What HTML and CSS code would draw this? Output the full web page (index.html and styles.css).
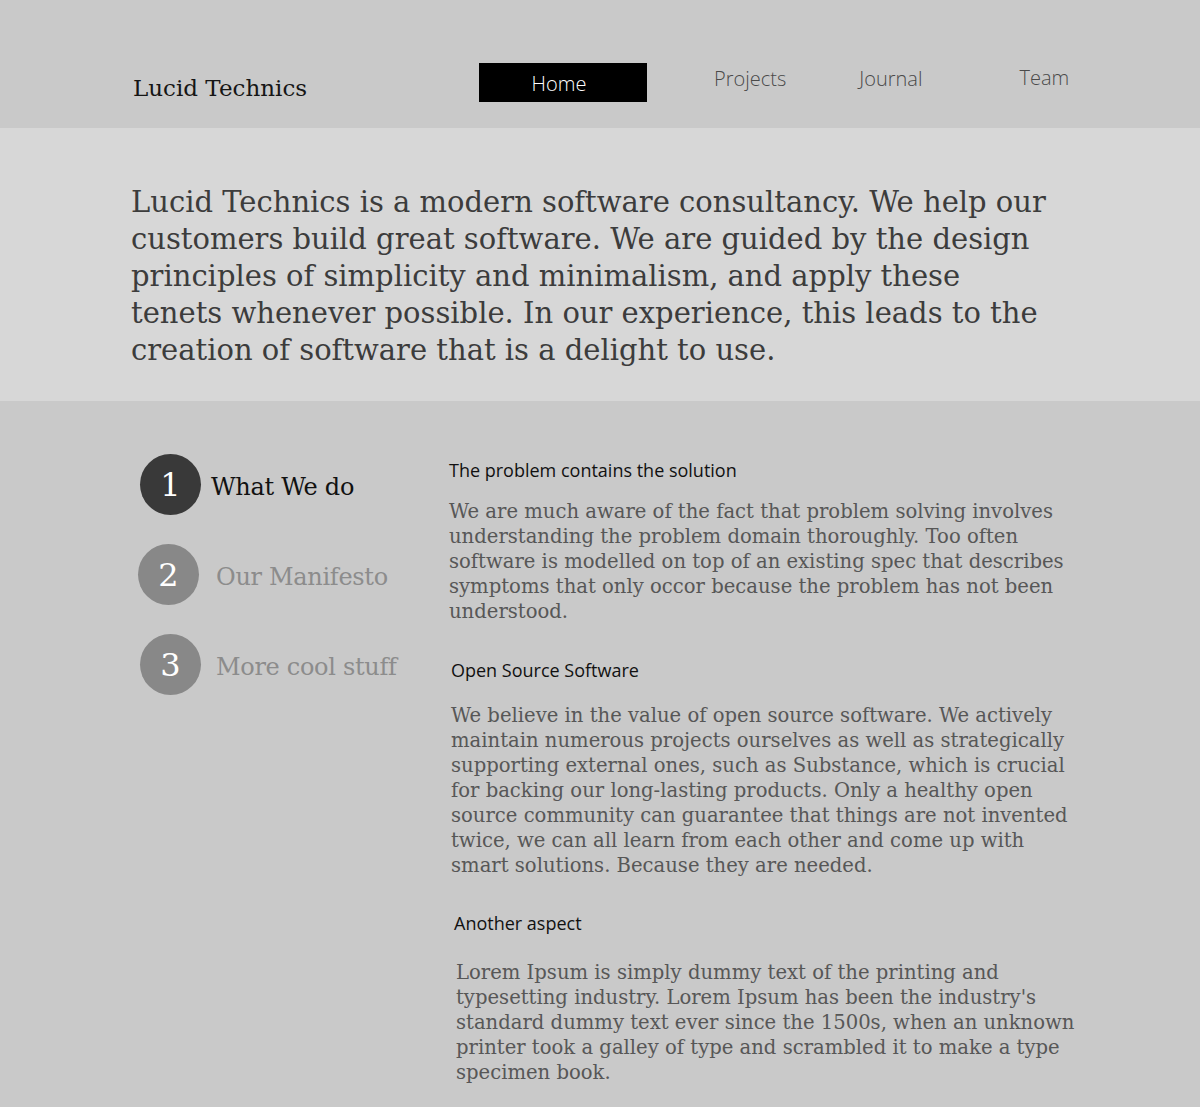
FILE: index.html
```html
<!DOCTYPE html>
<html lang="en">
<head>
<meta charset="utf-8">
<title>Lucid Technics</title>
<link rel="stylesheet" href="styles.css">
</head>
<body>
<header class="header">
  <div class="logo">Lucid Technics</div>
  <nav class="nav">
    <a class="nav-item nav-home">Home</a>
    <a class="nav-item nav-projects">Projects</a>
    <a class="nav-item nav-journal">Journal</a>
    <a class="nav-item nav-team">Team</a>
  </nav>
</header>
<section class="hero">
  <p class="hero-text">Lucid Technics is a modern software consultancy. We help our customers build great software. We are guided by the design principles of simplicity and minimalism, and apply these tenets whenever possible. In our experience, this leads to the creation of software that is a delight to use.</p>
</section>
<main class="main">
  <ul class="steps">
    <li class="step step-active"><span class="circle">1</span><span class="step-label">What We do</span></li>
    <li class="step step-2"><span class="circle">2</span><span class="step-label">Our Manifesto</span></li>
    <li class="step step-3"><span class="circle">3</span><span class="step-label">More cool stuff</span></li>
  </ul>
  <div class="content">
    <article class="block block-1">
      <h3 class="block-title">The problem contains the solution</h3>
      <p class="block-text">We are much aware of the fact that problem solving involves understanding the problem domain thoroughly. Too often software is modelled on top of an existing spec that describes symptoms that only occor because the problem has not been understood.</p>
    </article>
    <article class="block block-2">
      <h3 class="block-title">Open Source Software</h3>
      <p class="block-text">We believe in the value of open source software. We actively maintain numerous projects ourselves as well as strategically supporting external ones, such as Substance, which is crucial for backing our long-lasting products. Only a healthy open source community can guarantee that things are not invented twice, we can all learn from each other and come up with smart solutions. Because they are needed.</p>
    </article>
    <article class="block block-3">
      <h3 class="block-title">Another aspect</h3>
      <p class="block-text">Lorem Ipsum is simply dummy text of the printing and typesetting industry. Lorem Ipsum has been the industry's standard dummy text ever since the 1500s, when an unknown printer took a galley of type and scrambled it to make a type specimen book.</p>
    </article>
  </div>
</main>
</body>
</html>
```

FILE: styles.css
```css
* { box-sizing: border-box; }
html, body { margin: 0; padding: 0; }
body {
  background: #c9c9c9;
  font-family: "DejaVu Serif", "Liberation Serif", serif;
  height: 1107px;
  overflow: hidden;
}
.header {
  height: 128px;
  background: #c9c9c9;
  display: flex;
  align-items: flex-start;
  padding-left: 133px;
}
.logo {
  margin-top: 73px;
  font-size: 23px;
  line-height: 30px;
  color: #151515;
  width: 346px;
}
.nav {
  display: flex;
  align-items: flex-start;
  font-family: "Open Sans", sans-serif;
  font-weight: 300;
  font-size: 20px;
}
.nav-item {
  color: #4a4a4a;
  line-height: 30px;
  margin-top: 64px;
}
.nav-home {
  width: 168px;
  height: 39px;
  background: #000;
  color: #fff;
  text-align: center;
  line-height: 41px;
  padding-right: 8px;
  margin-top: 63px;
}
.nav-projects { margin-left: 67px; }
.nav-journal { margin-left: 73px; }
.nav-team { margin-left: 97px; margin-top: 63px; }

.hero {
  background: #d7d7d7;
  height: 273px;
  padding: 56px 0 0 131px;
}
.hero-text {
  margin: 0;
  width: 922px;
  font-size: 29px;
  line-height: 37px;
  color: #3c3c3c;
}

.main {
  display: flex;
  padding-left: 138px;
}
.steps {
  list-style: none;
  margin: 0;
  padding: 0;
  width: 311px;
  padding-top: 53px;
}
.step {
  display: flex;
  align-items: center;
  height: 61px;
  margin-bottom: 29px;
}
.circle {
  width: 61px;
  height: 61px;
  border-radius: 50%;
  background: #888;
  color: #fff;
  font-size: 32px;
  display: flex;
  align-items: center;
  justify-content: center;
  flex: none;
}
.step-active .circle { background: #393939; margin-left: 2px; }
.step-label {
  font-size: 24px;
  letter-spacing: -0.3px;
  color: #8c8c8c;
  margin-left: 17px;
  padding-top: 5px;
}
.step-active .step-label { color: #111; margin-left: 10px; }
.step-3 .circle { margin-left: 2px; }
.step-3 .step-label { margin-left: 15px; }

.content { width: 630px; padding-top: 58px; }
.block-title {
  margin: 0;
  font-family: "Open Sans", sans-serif;
  font-weight: 400;
  font-size: 18px;
  line-height: 22px;
  color: #111;
}
.block-text {
  margin: 18px 0 0;
  font-size: 19.6px;
  line-height: 25px;
  color: #575757;
}
.block-1 { margin-left: 0; }
.block-2 { margin-left: 2px; margin-top: 35px; }
.block-2 .block-text { margin-top: 22px; }
.block-3 { margin-left: 5px; margin-top: 34px; }
.block-3 .block-text { margin-left: 2px; margin-top: 26px; }
```
